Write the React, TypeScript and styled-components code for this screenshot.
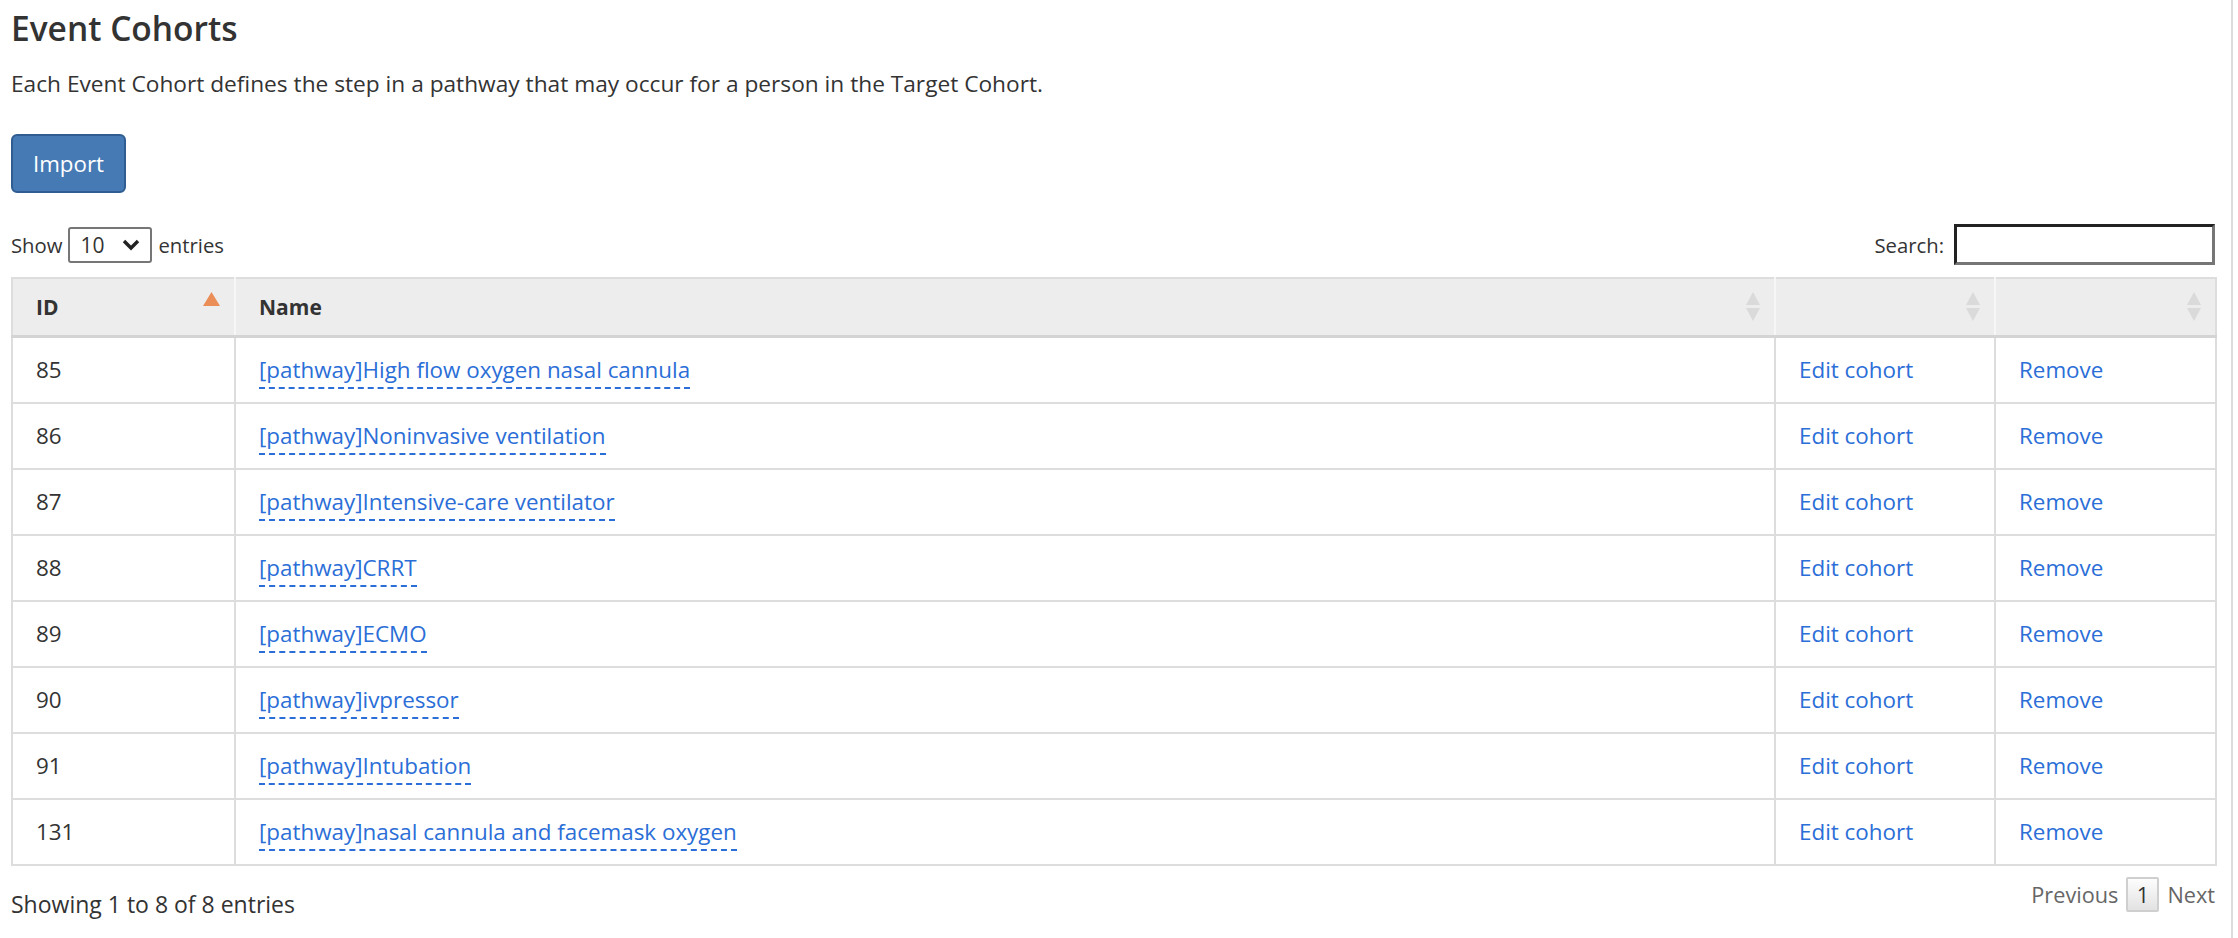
import React from "react";
import styled, { createGlobalStyle } from "styled-components";

const GlobalStyle = createGlobalStyle`
  html, body {
    margin: 0;
    padding: 0;
    background: #fff;
  }
  body {
    font-family: "Open Sans", "Noto Sans", sans-serif;
    font-size: 22.4px;
    color: #333;
  }
`;

type Row = { id: number; name: string };

const rows: Row[] = [
  { id: 85, name: "[pathway]High flow oxygen nasal cannula" },
  { id: 86, name: "[pathway]Noninvasive ventilation" },
  { id: 87, name: "[pathway]Intensive-care ventilator" },
  { id: 88, name: "[pathway]CRRT" },
  { id: 89, name: "[pathway]ECMO" },
  { id: 90, name: "[pathway]ivpressor" },
  { id: 91, name: "[pathway]Intubation" },
  { id: 131, name: "[pathway]nasal cannula and facemask oxygen" },
];

const SortIcon = ({ active }: { active?: boolean }) =>
  active ? (
    <svg width="17" height="30" viewBox="0 0 17 30">
      <path d="M8.5 0 L17 14 L0 14 Z" fill="#eb8d57" />
    </svg>
  ) : (
    <svg width="14" height="30" viewBox="0 0 14 30">
      <path d="M7 0 L14 13 L0 13 Z" fill="#dadada" />
      <path d="M7 29 L14 16 L0 16 Z" fill="#dadada" />
    </svg>
  );

const Chevron = () => (
  <svg width="18" height="12" viewBox="0 0 18 12">
    <path d="M2 2 L9 9 L16 2" stroke="#222" strokeWidth="3.4" fill="none" />
  </svg>
);

export default function App() {
  return (
    <>
      <GlobalStyle />
      <Page>
        <Title>Event Cohorts</Title>
        <Description>
          Each Event Cohort defines the step in a pathway that may occur for a
          person in the Target Cohort.
        </Description>
        <ImportButton>Import</ImportButton>

        <Controls>
          <Length>
            Show
            <SelectBox>
              <span>10</span>
              <Chevron />
            </SelectBox>
            entries
          </Length>
          <SearchLabel>
            Search:
            <SearchInput />
          </SearchLabel>
        </Controls>

        <Table>
          <colgroup>
            <col style={{ width: 223 }} />
            <col style={{ width: 1540 }} />
            <col style={{ width: 220 }} />
            <col style={{ width: 221 }} />
          </colgroup>
          <thead>
            <tr>
              <HeadCell>
                <HeadInner>
                  <span>ID</span>
                  <SortIcon active />
                </HeadInner>
              </HeadCell>
              <HeadCell>
                <HeadInner>
                  <span>Name</span>
                  <SortIcon />
                </HeadInner>
              </HeadCell>
              <HeadCell>
                <HeadInner>
                  <span />
                  <SortIcon />
                </HeadInner>
              </HeadCell>
              <HeadCell>
                <HeadInner>
                  <span />
                  <SortIcon />
                </HeadInner>
              </HeadCell>
            </tr>
          </thead>
          <tbody>
            {rows.map((r) => (
              <tr key={r.id}>
                <Cell>{r.id}</Cell>
                <Cell>
                  <NameLink>{r.name}</NameLink>
                </Cell>
                <Cell>
                  <ActionLink>Edit cohort</ActionLink>
                </Cell>
                <Cell>
                  <ActionLink>Remove</ActionLink>
                </Cell>
              </tr>
            ))}
          </tbody>
        </Table>

        <Footer>
          <Info>Showing 1 to 8 of 8 entries</Info>
          <Paging>
            <PageText>Previous</PageText>
            <PageButton>1</PageButton>
            <PageText>Next</PageText>
          </Paging>
        </Footer>
      </Page>
    </>
  );
}

const Page = styled.div`
  width: 2233px;
  min-height: 938px;
  box-sizing: border-box;
  padding: 0 16px 0 11px;
  border-right: 2px solid #dcdcdc;
`;

const Title = styled.h3`
  margin: 0;
  padding-top: 8px;
  font-size: 33.5px;
  font-weight: 600;
  line-height: 40px;
  color: #333;
`;

const Description = styled.p`
  margin: 21px 0 0;
  font-size: 22.7px;
  line-height: 30px;
`;

const ImportButton = styled.button`
  margin-top: 35px;
  width: 115px;
  height: 59px;
  background: #467ab5;
  border: 2px solid #2f5d91;
  border-radius: 6px;
  color: #fff;
  font-family: inherit;
  font-size: 22.3px;
  padding: 0;
  display: block;
`;

const Controls = styled.div`
  margin-top: 31px;
  height: 41px;
  display: flex;
  align-items: center;
  justify-content: space-between;
  font-size: 20.3px;
`;

const Length = styled.label`
  display: flex;
  align-items: center;
  gap: 6px;
`;

const SelectBox = styled.span`
  width: 84px;
  height: 36px;
  box-sizing: border-box;
  border: 2px solid #767676;
  border-radius: 3px;
  display: flex;
  align-items: center;
  justify-content: space-between;
  padding: 0 10px 0 10px;
  font-size: 21px;
`;

const SearchLabel = styled.label`
  display: flex;
  align-items: center;
  gap: 10px;
`;

const SearchInput = styled.input`
  width: 261px;
  height: 41px;
  box-sizing: border-box;
  border-style: solid;
  border-width: 3px;
  border-color: #222 #767676 #767676 #222;
  outline: none;
  padding: 0 6px;
  font-family: inherit;
`;

const Table = styled.table`
  margin-top: 12px;
  width: 2204px;
  table-layout: fixed;
  border-collapse: collapse;
  border: 2px solid #dddddd;
`;

const HeadCell = styled.th`
  height: 56px;
  background: #ededed;
  border-left: 2px solid #f6f6f6;
  border-bottom: 3px solid #d4d4d4;
  padding: 0 14px 0 23px;
  text-align: left;
  font-weight: 700;
  font-size: 21px;
  color: #333;
  &:first-child {
    border-left: 2px solid #dddddd;
  }
`;

const HeadInner = styled.div`
  display: flex;
  align-items: center;
  justify-content: space-between;
`;

const Cell = styled.td`
  height: 66px;
  box-sizing: border-box;
  border: 2px solid #dddddd;
  padding: 0 23px;
  vertical-align: middle;
  font-size: 22.4px;
`;

const NameLink = styled.a`
  color: #2b6ed7;
  text-decoration: none;
  padding-bottom: 2px;
  border-bottom: 2px dashed #2b6ed7;
  cursor: pointer;
`;

const ActionLink = styled.a`
  color: #2b6ed7;
  text-decoration: none;
  cursor: pointer;
`;

const Footer = styled.div`
  display: flex;
  justify-content: space-between;
  align-items: flex-start;
  margin-top: 11px;
`;

const Info = styled.div`
  padding-top: 12px;
  font-size: 23px;
  line-height: 30px;
`;

const Paging = styled.div`
  display: flex;
  align-items: center;
  gap: 8px;
  font-size: 21.7px;
`;

const PageText = styled.span`
  color: #666;
`;

const PageButton = styled.span`
  width: 33px;
  height: 35px;
  box-sizing: border-box;
  display: flex;
  align-items: center;
  justify-content: center;
  border: 2px solid #cfcfcf;
  border-radius: 2px;
  background: linear-gradient(#fdfdfd, #e2e2e2);
  color: #333;
`;
